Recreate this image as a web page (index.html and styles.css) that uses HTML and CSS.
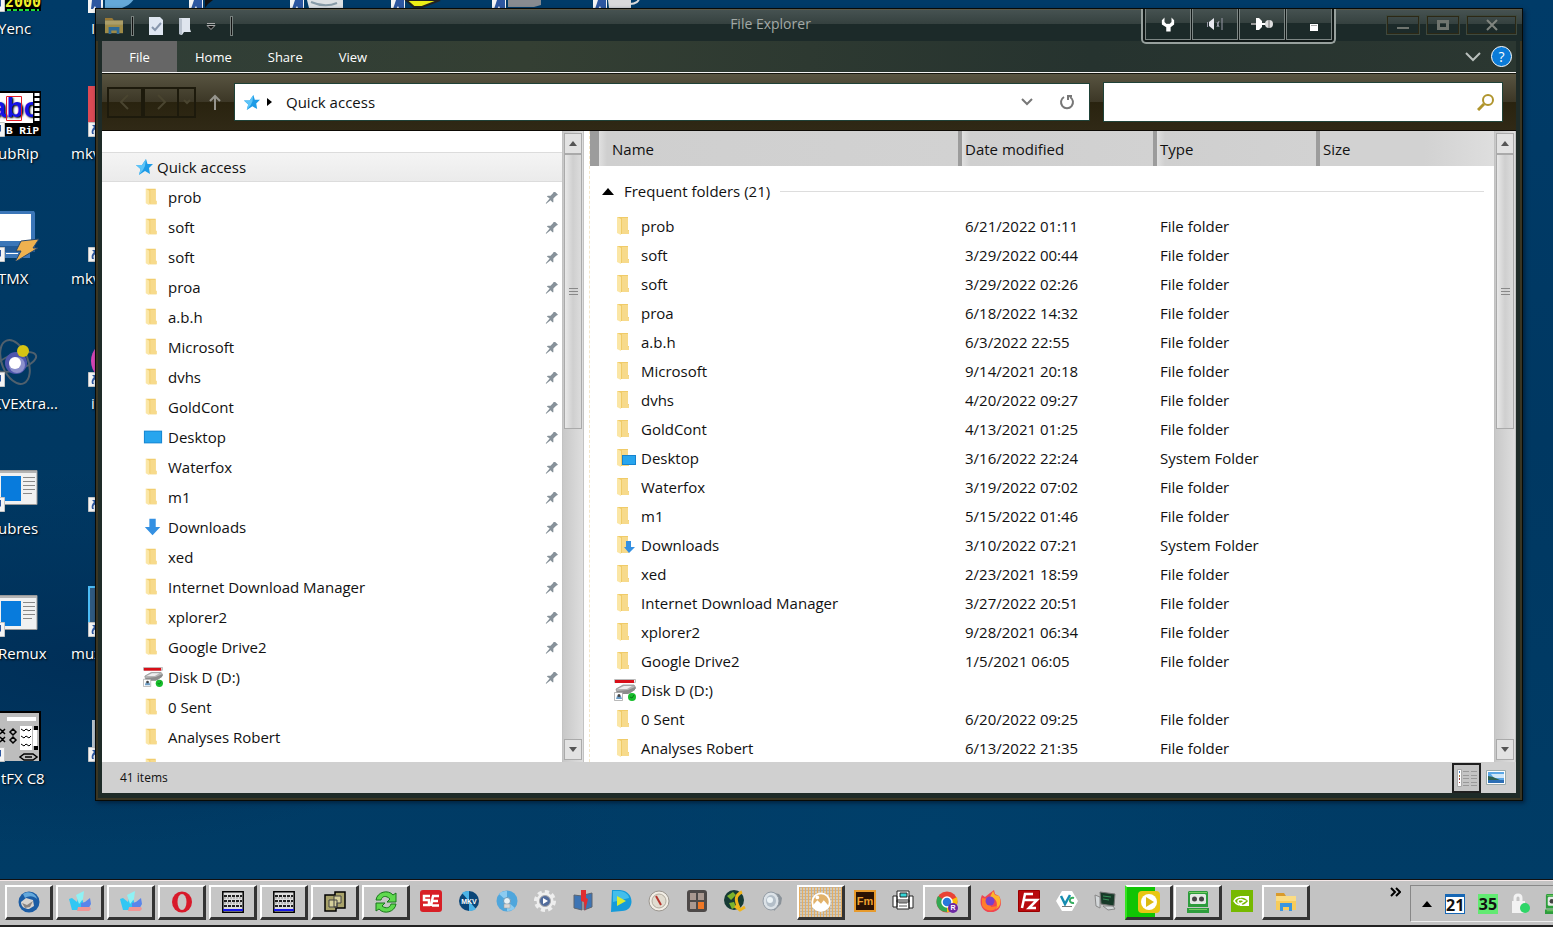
FILE: index.html
```html
<!DOCTYPE html>
<html lang="en">
  <head>
    <meta charset="UTF-8" />
    <meta name="viewport" content="width=device-width, initial-scale=1" />
    <title>File Explorer</title>
    <link rel="stylesheet" href="styles.css" />
  </head>
  <body>
    <!-- shared icons -->
    <svg class="sprite" aria-hidden="true">
      <symbol id="folder" viewBox="0 0 22 22">
        <path fill="#f0cb68" d="M3 2h11v13h1v4H7z" />
        <path fill="#f9e09a" d="M8 3h6v12l1 1v3H8z" opacity=".7" />
        <path fill="#fbe6a5" d="M3 2l4 2v16l-4-2z" />
      </symbol>
      <symbol id="desktop" viewBox="0 0 22 22">
        <path fill="#1583cf" d="M1 4h20v14H1z" />
        <path fill="#27a5ee" d="M2 5h18v12H2z" />
      </symbol>
      <symbol id="download" viewBox="0 0 22 22">
        <path fill="#3490e2" d="M7 2h7v9h5l-8.500 9L2 11h5z" />
      </symbol>
      <symbol id="folder-desktop" viewBox="0 0 22 22">
        <use href="#folder" />
        <path fill="#1583cf" d="M8 8h14v10H8z" />
        <path fill="#27a5ee" d="M9 9h12v8H9z" />
      </symbol>
      <symbol id="folder-download" viewBox="0 0 22 22">
        <use href="#folder" />
        <path fill="#3490e2" d="M12 7h5v6h4l-6 6-5-6h2z" />
      </symbol>
      <symbol id="disk" viewBox="0 0 22 22">
        <path fill="#eee" stroke="#bbb" d="M.5.5h21v3H.5z" />
        <path fill="#d80f18" d="M1 1h19v3H1z" />
        <path fill="#b5b5b5" stroke="#888" stroke-width=".7" d="M2 10l7-4h11l2 3-6 5H3z" />
        <path fill="#eee" d="M4 10l6-3h8l-5 3z" />
        <path fill="#8c8c8c" d="M3 12l11-1 7-3v3l-7 4H3z" />
        <path fill="#fff" stroke="#999" stroke-width=".7" d="M.5 13.500h8v8h-8z" />
        <path fill="#6b9cc4" d="M2 20l1-3h4l1 3z" />
        <circle cx="5" cy="16.500" r="1.500" fill="#444" />
        <circle cx="18" cy="18" r="4" fill="#16bd2b" />
        <path fill="none" stroke="#0a7a18" d="M16 18l2 1 2-3" />
      </symbol>
      <symbol id="star" viewBox="0 0 18 18">
        <path fill="#1d9be6" d="M11 1l1.500 5H18l-4 4 1 6-5-3-6 4 1.500-6L1 7h6z" />
        <path fill="#5cc4f8" d="M11 1l-1 7-2 4-4 5 1.500-6L1 7h6z" />
      </symbol>
      <symbol id="pin" viewBox="0 0 14 14">
        <path fill="#87929a" d="M9 1h2l3 3-2 1-3 3v4H8L6 10l-5 4 0-1 4-5-3-2 1-1h3l3-3z" />
      </symbol>
      <symbol id="explorer" viewBox="0 0 22 20">
        <path fill="#d99a2b" d="M1 1h8l2 3H1z" />
        <path fill="#f7cc5b" d="M1 4h20v14H1z" />
        <path fill="#fbdc83" d="M1 4h20v5H1z" />
        <path fill="#3a96e0" d="M5 11h12v8h-3v-4H8v4H5z" />
      </symbol>
      <symbol id="shortcut" viewBox="0 0 15 15">
        <path fill="#f4f4f4" stroke="#c4c4c4" d="M.5.5h14v14H.5z" />
        <path fill="#2d57a0" d="M4 3h7v7L8 7c-3 1-3 3-2 5H4c-1-3 0-5 2-7z" />
      </symbol>
      <symbol id="app-window" viewBox="0 0 44 50">
        <path fill="#f1f1f1" stroke="#999" d="M-1 9.500h40v34H-1z" />
        <path fill="#b4b4b4" d="M0 10h39v2H0z" />
        <path fill="#087bdc" d="M3 15h20v25H3z" />
        <path stroke="#888" d="M25 16.500h12M25 20.500h12M25 24.500h12M25 28.500h12M25 32.500h9" />
      </symbol>
      <symbol id="ie" viewBox="0 0 22 22">
        <path fill="#31c7f4" d="M0 8l3-1 5 4 2-7 4 6v7l-5 2H3z" />
        <path fill="#8ff2f4" d="M7 4l8-4-1 8-4 5z" />
        <path fill="#5a85ea" d="M12 12l4-1 5-4 1 6-4 7h-6z" />
        <path fill="#ee9696" d="M9 16h12l1 2-2 2H8z" />
      </symbol>
      <symbol id="keys" viewBox="0 0 22 22">
        <path fill="#ddd" stroke="#000" stroke-width="1.500" d="M.8.8h20.400v20.400H.8z" />
        <path stroke="#222" stroke-width="2" stroke-dasharray="3 1" d="M2 5h18M2 10h18M2 15h18" />
        <path stroke="#999" stroke-dasharray="2 1" d="M2 7h18M2 12h18" />
        <path stroke="#1717e8" stroke-width="2" d="M1 19h20" />
      </symbol>
      <symbol id="robot" viewBox="0 0 22 22">
        <path fill="#2d9d3c" d="M2 0h18l1 1v15H1V1zM0 17h22v5H0z" />
        <path fill="#e4e8e4" d="M4 3h14l1 1v8l-1 1H4l-1-1V4z" />
        <circle cx="7.500" cy="8" r="2.500" fill="#444" />
        <circle cx="14.500" cy="8" r="2.500" fill="#444" />
        <path fill="#76cc62" d="M2 1h18v1H2zM2 18h18v1H2z" />
      </symbol>
    </svg>

    <main class="desktop">
      <!-- column of shortcuts cut off by the left screen edge -->
      <div class="shortcut" style="--x: -2px; --row: 0">
        <svg class="pic" viewBox="0 0 44 50">
          <path fill="#000" d="M0 0h43v52H0z" />
          <text class="pixel" x="7" y="46">2000</text>
          <path stroke="#22e038" stroke-width="2" stroke-dasharray="4 2" d="M9 49h32" />
        </svg>
        <svg class="arrow"><use href="#shortcut" /></svg>
        <span>Yenc</span>
      </div>
      <div class="shortcut" style="--x: -2px; --row: 1">
        <svg class="pic" viewBox="0 0 44 50">
          <path fill="#000" d="M0 5h43v45H0z" />
          <path fill="#fff" d="M0 7h35v30H0z" />
          <text class="abc" x="-7" y="31">abc</text>
          <path d="M35 5h8v45h-8z" />
          <path stroke="#fff" stroke-width="5" stroke-dasharray="3 2" d="M39 7v30" />
          <path fill="none" stroke="#e31b23" d="M8.500 10.500h15v24h-15z" />
          <text class="rip" x="8" y="48">B RiP</text>
        </svg>
        <svg class="arrow"><use href="#shortcut" /></svg>
        <span>ubRip</span>
      </div>
      <div class="shortcut" style="--x: -2px; --row: 2">
        <svg class="pic" viewBox="0 0 44 50">
          <path fill="#3b76b8" d="M0 0h36l1 2v38H0z" />
          <path fill="#fff" d="M0 3h33v27H0z" />
          <path fill="#225a97" d="M0 35h37v6H0z" />
          <path fill="#3b76b8" d="M0 41h32v6H0z" />
          <path stroke="#fff" d="M8 42.500h12" />
          <path fill="#eeb14f" stroke="#26476e" d="M23 30l18-2-6 9h5L17 51l6-11h-5z" />
        </svg>
        <svg class="arrow"><use href="#shortcut" /></svg>
        <span>TMX</span>
      </div>
      <div class="shortcut" style="--x: -2px; --row: 3">
        <svg class="pic" viewBox="0 0 44 50">
          <g fill="none" stroke="#50606d" stroke-width="2">
            <ellipse cx="17" cy="26" rx="13" ry="23" transform="rotate(-22 17 26)" />
            <ellipse cx="18" cy="26" rx="21" ry="8" transform="rotate(-18 18 26)" />
          </g>
          <circle cx="18" cy="27" r="11" fill="#4e56ad" />
          <circle cx="19" cy="29" r="8" fill="#8c90cc" />
          <circle cx="17" cy="27" r="6" fill="#fff" />
          <circle cx="25" cy="15" r="6" fill="#d6c413" />
        </svg>
        <svg class="arrow"><use href="#shortcut" /></svg>
        <span class="cut">KVExtra...</span>
      </div>
      <div class="shortcut" style="--x: -2px; --row: 4">
        <svg class="pic"><use href="#app-window" /></svg>
        <svg class="arrow"><use href="#shortcut" /></svg>
        <span>ubres</span>
      </div>
      <div class="shortcut" style="--x: -2px; --row: 5">
        <svg class="pic"><use href="#app-window" /></svg>
        <svg class="arrow"><use href="#shortcut" /></svg>
        <span>Remux</span>
      </div>
      <div class="shortcut" style="--x: -2px; --row: 6">
        <svg class="pic" viewBox="0 0 44 50">
          <path fill="#bdbdbd" stroke="#000" stroke-width="2" d="M-1 1h43v52H-1z" />
          <path fill="#fff" d="M9 6h29v4H9zM22 15h12v24H22zM35 19h4v16h-4z" />
          <path fill="none" stroke="#000" d="M23 18l3 2 2-2 3 2 2-2M23 25l3 2 2-2 3 2 2-2M23 33l3 2 2-2 3 2 2-2" />
          <path fill="none" stroke="#000" stroke-width="1.500" d="M12 21l3-3 3 3-3 3zM12 29l3-3 3 3-3 3zM2 18l5 5M7 18l-5 5M2 26l5 5M7 26l-5 5M26 43h9l4 3-4 3h-9l-4-3zM27 46h7" />
          <path d="M36 15h4v4h-4zM36 35h4v4h-4z" />
        </svg>
        <svg class="arrow"><use href="#shortcut" /></svg>
        <span class="nudge">tFX C8</span>
      </div>

      <!-- second column, mostly behind the window -->
      <div class="shortcut behind" style="--x: 71px; --row: 0">
        <svg class="arrow"><use href="#shortcut" /></svg>
        <span class="indent">I</span>
      </div>
      <div class="shortcut behind" style="--x: 71px; --row: 1">
        <svg class="pic" viewBox="0 0 44 50"><path fill="#dc4a55" d="M0 0h40v38H0z" /></svg>
        <svg class="arrow"><use href="#shortcut" /></svg>
        <span>mkv</span>
      </div>
      <div class="shortcut behind" style="--x: 71px; --row: 2">
        <svg class="arrow"><use href="#shortcut" /></svg>
        <span>mkv</span>
      </div>
      <div class="shortcut behind" style="--x: 71px; --row: 3">
        <svg class="pic" viewBox="0 0 44 50"><circle cx="23" cy="25" r="20" fill="#d845b4" /></svg>
        <svg class="arrow"><use href="#shortcut" /></svg>
        <span class="indent">i</span>
      </div>
      <div class="shortcut behind" style="--x: 71px; --row: 4">
        <svg class="arrow"><use href="#shortcut" /></svg>
      </div>
      <div class="shortcut behind" style="--x: 71px; --row: 5">
        <svg class="pic" viewBox="0 0 44 50"><path fill="#305a80" stroke="#4cbcf5" stroke-width="2" d="M1 1h40v48H1z" /></svg>
        <svg class="arrow"><use href="#shortcut" /></svg>
        <span>mux</span>
      </div>
      <div class="shortcut behind" style="--x: 71px; --row: 6">
        <svg class="pic" viewBox="0 0 44 50"><path fill="#b8c4cc" d="M4 9h36v38H4z" /></svg>
        <svg class="arrow"><use href="#shortcut" /></svg>
      </div>

      <!-- bottoms of the shortcuts along the top edge -->
      <svg class="top-icons" width="560" height="13" viewBox="0 0 560 13" aria-hidden="true">
        <path fill="#f4f4f4" d="M0-2h15v15H0zM101-2h14v15h-14zM202-2h14v15h-14zM303-2h14v15h-14zM404-2h14v15h-14zM505-2h14v15h-14z" />
        <path fill="#2d57a0" d="M4 0h9v8H8l-1-2-2 3H3zM106 0h8v8h-5l-1-2-2 3h-3zM207 0h8v8h-5l-1-2-2 3h-3zM308 0h8v8h-5l-1-2-2 3h-3zM409 0h8v8h-5l-1-2-2 3h-3zM510 0h8v8h-5l-1-2-2 3h-3z" />
        <path fill="#65a9d8" d="M17-1h29c-3 5-7 7-12 9H17z" />
        <path fill="#111" d="M117 0h8l-5 4-3 4z" />
        <path fill="#dde1e4" d="M219 0h36v8h-34z" />
        <path fill="none" stroke="#879ba8" stroke-width="2" d="M223 2q14 6 26 1" />
        <path fill="#eeef16" stroke="#222" stroke-width="2" d="M318 0h34l-18 7h-8z" />
        <path fill="#888b90" d="M420 0h33v5l-7 2h-26z" />
        <path fill="#dadada" d="M520 0h23v8h-22z" />
        <path fill="none" stroke="#dadada" stroke-width="2" d="M542 4c6 0 9-3 9-6" />
      </svg>

      <section class="window">
        <header class="titlebar">
          <div class="quick-tools">
            <svg width="20" height="18" class="dim"><use href="#explorer" /></svg>
            <i class="divider"></i>
            <button aria-label="Properties">
              <svg width="16" height="20" viewBox="0 0 16 20">
                <path fill="#dfe7f2" d="M1 1h11l3 3v15H1z" />
                <path fill="none" stroke="#8797ad" stroke-width="2" d="M4 11l3 3 6-7" />
              </svg>
            </button>
            <button aria-label="New folder">
              <svg width="14" height="20" viewBox="0 0 14 20">
                <path fill="#dfe5ee" d="M1 2h11v11l1 3H6l-2 3-3-1z" />
                <path fill="#b9c2ce" d="M1 2l3 1v16l-3-1z" />
              </svg>
            </button>
            <button aria-label="Customize toolbar">
              <svg width="10" height="8" viewBox="0 0 10 8">
                <path stroke="#aaa" d="M1 1.500h8" />
                <path fill="#111" stroke="#aaa" d="M1 3.500h8l-4 4z" />
              </svg>
            </button>
            <i class="divider"></i>
          </div>
          <h1>File Explorer</h1>
          <div class="window-buttons">
            <button aria-label="Minimize">
              <svg width="14" height="12" viewBox="0 0 14 12"><path stroke="#70756f" stroke-width="2" d="M1 9h12" /></svg>
            </button>
            <button aria-label="Maximize">
              <svg width="14" height="12" viewBox="0 0 14 12"><path fill="none" stroke="#70756f" stroke-width="3" d="M2.500 2.500h9v7h-9z" /></svg>
            </button>
            <button class="close" aria-label="Close">
              <svg width="14" height="12" viewBox="0 0 14 12"><path stroke="#80857f" stroke-width="2" d="M2 1l10 10M12 1L2 11" /></svg>
            </button>
          </div>
        </header>

        <div class="overlay-tools">
          <button aria-label="Settings">
            <svg width="14" height="15" viewBox="0 0 16 16">
              <path fill="#fff" d="M4 0v5l2 2h4l2-2V0l3 3v5l-4 3v5H6v-5L1 8V3z" />
            </svg>
          </button>
          <button aria-label="Sound">
            <svg width="18" height="14" viewBox="0 0 18 14">
              <path fill="#e8e8f0" d="M3 5l5-4v12L3 9z" />
              <path fill="none" stroke="#999aa8" d="M1.500 5v5M11 5l2 5M13 4l-2 6M16 1v12" />
            </svg>
          </button>
          <button aria-label="Pin on top">
            <svg width="22" height="14" viewBox="0 0 22 14">
              <path stroke="#999" stroke-width="2" d="M0 7h6" />
              <path fill="#fff" d="M5 1h3l3 3v6l-3 3H5z" />
              <path stroke="#fff" stroke-width="2" d="M11 7h4" />
              <circle cx="18" cy="7" r="4" fill="#ddd" />
              <path stroke="#777" d="M18 3v8" />
            </svg>
          </button>
          <button class="last" aria-label="Minimize to tray">
            <svg width="8" height="7" viewBox="0 0 8 7"><path fill="#fff" d="M0 0h8v7H0z" /><path fill="#aaa" d="M1 1h6v1H1z" /></svg>
          </button>
        </div>

        <nav class="ribbon">
          <button class="active">File</button>
          <button>Home</button>
          <button>Share</button>
          <button>View</button>
          <div class="ribbon-right">
            <button class="expand" aria-label="Expand the ribbon">
              <svg width="16" height="10" viewBox="0 0 16 10"><path fill="none" stroke="#b9bfbc" stroke-width="2" d="M1 1l7 7 7-7" /></svg>
            </button>
            <button class="help" aria-label="Help">?</button>
          </div>
        </nav>

        <div class="navbar">
          <div class="history">
            <button aria-label="Back"><svg width="12" height="16" viewBox="0 0 12 16"><path d="M9 1L2 8l7 7" /></svg></button>
            <button aria-label="Forward"><svg width="12" height="16" viewBox="0 0 12 16"><path d="M3 1l7 7-7 7" /></svg></button>
            <button class="recent" aria-label="Recent locations"><svg width="8" height="6" viewBox="0 0 8 6"><path d="M1 1l3 3 3-3" /></svg></button>
          </div>
          <button class="up" aria-label="Up">
            <svg width="14" height="16" viewBox="0 0 14 16"><path fill="none" stroke="#96958e" stroke-width="2" d="M7 16V2M2 7l5-5 5 5" /></svg>
          </button>
          <div class="address">
            <svg width="17" height="17"><use href="#star" /></svg>
            <svg width="5" height="8" viewBox="0 0 5 8"><path d="M0 0l5 4-5 4z" /></svg>
            <a href="#quick">Quick access</a>
            <button aria-label="Previous locations">
              <svg width="12" height="8" viewBox="0 0 12 8"><path fill="none" stroke="#777" stroke-width="2" d="M1 1l5 5 5-5" /></svg>
            </button>
            <button aria-label="Refresh">
              <svg width="16" height="16" viewBox="0 0 16 16">
                <path fill="none" stroke="#777" stroke-width="2" d="M11 3a6 6 0 1 1-6 0" />
                <path fill="#777" d="M13 1H8v5h2V3h3z" />
              </svg>
            </button>
          </div>
          <label class="search">
            <input type="text" aria-label="Search" />
            <svg width="18" height="18" viewBox="0 0 18 18">
              <circle cx="11" cy="7" r="5" fill="none" stroke="#b0952d" stroke-width="2" />
              <path stroke="#b0952d" stroke-width="3" d="M7 11l-6 6" />
            </svg>
          </label>
        </div>

        <div class="panes">
          <nav class="tree">
            <a class="root" id="quick" href="#quick">
              <svg width="18" height="18"><use href="#star" /></svg>Quick access
            </a>
            <ul id="tree"></ul>
          </nav>
          <div class="scrollbar">
            <button aria-label="Scroll up"><svg width="8" height="5" viewBox="0 0 8 5"><path d="M0 5l4-5 4 5z" /></svg></button>
            <div class="thumb"><i></i></div>
            <button aria-label="Scroll down"><svg width="8" height="5" viewBox="0 0 8 5"><path d="M0 0l4 5 4-5z" /></svg></button>
          </div>
          <div class="splitter"></div>
          <div class="list">
            <table>
              <colgroup>
                <col class="col-name" />
                <col class="col-date" />
                <col class="col-type" />
                <col />
              </colgroup>
              <thead>
                <tr>
                  <th scope="col">Name</th>
                  <th scope="col">Date modified</th>
                  <th scope="col">Type</th>
                  <th scope="col">Size</th>
                </tr>
              </thead>
              <tbody id="files">
                <tr class="group">
                  <th colspan="4" scope="rowgroup">
                    <div>
                      <svg width="12" height="7" viewBox="0 0 12 7"><path d="M0 7l6-7 6 7z" /></svg>
                      Frequent folders (21)
                    </div>
                  </th>
                </tr>
              </tbody>
            </table>
          </div>
          <div class="scrollbar">
            <button aria-label="Scroll up"><svg width="8" height="5" viewBox="0 0 8 5"><path d="M0 5l4-5 4 5z" /></svg></button>
            <div class="thumb"><i></i></div>
            <button aria-label="Scroll down"><svg width="8" height="5" viewBox="0 0 8 5"><path d="M0 0l4 5 4-5z" /></svg></button>
          </div>
        </div>

        <footer class="status">
          <span>41 items</span>
          <button class="view on" aria-label="Details">
            <svg width="20" height="18" viewBox="0 0 20 18">
              <path fill="#fff" stroke="#aaa" d="M.5.5h4v17h-4z" />
              <path stroke="#999" d="M6 2.500h6M14 2.500h6M6 6.500h6M14 6.500h6M6 9.500h6M14 9.500h6M6 13.500h6M14 13.500h6M6 16.500h6M14 16.500h6" />
              <path fill="#4a7cba" d="M2 2h1v2H2z" /><path fill="#b07a3a" d="M2 6h1v2H2z" />
              <path fill="#a04040" d="M2 9h1v2H2zM2 13h1v1H2z" />
            </svg>
          </button>
          <button class="view" aria-label="Large icons">
            <svg width="20" height="15" viewBox="0 0 20 15">
              <path fill="#fff" stroke="#9aa" d="M.5.5h19v14H.5z" />
              <path fill="#5aa7e6" d="M2 2h16v11H2z" />
              <path fill="#cfe7f8" d="M5 4h13v4H8z" />
              <path fill="#2e6150" d="M2 6l5 1 7 3H2z" />
              <path fill="#2d6fb5" d="M2 10h16v3H2z" />
            </svg>
          </button>
        </footer>
      </section>
    </main>

    <footer class="taskbar">
      <button class="task" aria-label="Thunderbird">
        <svg viewBox="0 0 22 22"><circle cx="11" cy="11" r="10.500" fill="#1c5da5" /><path fill="#65a9dc" d="M5 3c6-4 13 0 14 5-4-4-9-3-12-1z" /><path fill="#d8d4d0" d="M3 11l5-4 7 2 1 6-5 3c-4 0-8-2-8-7z" /><path fill="#8b8583" d="M4 12l5 2 6-4-3 6-5 1z" /></svg>
      </button>
      <button class="task" aria-label="Mail"><svg><use href="#ie" /></svg></button>
      <button class="task" aria-label="Mail 2"><svg><use href="#ie" /></svg></button>
      <button class="task" aria-label="Opera">
        <svg viewBox="0 0 22 22"><ellipse cx="11" cy="11" rx="10" ry="10.500" fill="#d8192a" /><ellipse cx="11" cy="11" rx="4.500" ry="8" fill="#c6c6c6" /></svg>
      </button>
      <button class="task" aria-label="Keyboard"><svg><use href="#keys" /></svg></button>
      <button class="task" aria-label="Keyboard 2"><svg><use href="#keys" /></svg></button>
      <button class="task" aria-label="Windows">
        <svg viewBox="0 0 22 22"><path fill="#a8a26a" stroke="#000" stroke-width="1.500" d="M1 4h10V1h10v16h-9v3H1z" /><path fill="#d6d09b" stroke="#444" d="M5 9h8v7H5zM10 5h7v7h-4v4h-3z" /></svg>
      </button>
      <button class="task" aria-label="Sync">
        <svg viewBox="0 0 22 22"><path fill="#5fd94e" stroke="#19761c" d="M1 9c1-8 12-11 17-5l3-2v9h-9l3-3c-4-4-8-3-9 1z" /><path fill="#5fd94e" stroke="#19761c" d="M21 13c-1 8-12 11-17 5l-3 2v-8h9l-3 3c4 3 8 2 9-2z" /></svg>
      </button>
      <a class="launch" href="#" aria-label="Subtitle Edit">
        <svg viewBox="0 0 22 22"><rect width="22" height="22" rx="3" fill="#d81f26" /><path fill="none" stroke="#fff" stroke-width="2.500" d="M10 6H4v4h5v5H3M12 6h7M12 11h6M12 15.500h7M13 6l-2 10" /></svg>
      </a>
      <a class="launch" href="#" aria-label="MKV">
        <svg viewBox="0 0 22 22"><circle cx="11" cy="11" r="10" fill="#0b4678" /><path fill="#4bb4e8" d="M11 11L4 3c3-2 6-2 7-2zM11 11l7 8c-3 2-6 2-7 2z" /><text class="tiny" x="11" y="14">MKV</text></svg>
      </a>
      <a class="launch" href="#" aria-label="Disc">
        <svg viewBox="0 0 22 22"><circle cx="11" cy="11" r="10.500" fill="#4fa6dc" /><path fill="#8ccbf0" d="M11 11L3 4c3-3 6-3 8-3zM11 11l8 7c-3 3-6 3-8 3z" /><circle cx="11" cy="11" r="3.500" fill="#e8f1f5" stroke="#6b98b6" /><path fill="#d8d8d8" stroke="#999" stroke-width=".5" d="M8 14h6v4H8z" /></svg>
      </a>
      <a class="launch" href="#" aria-label="Converter">
        <svg viewBox="0 0 22 22"><circle cx="11" cy="11" r="9" fill="none" stroke="#eee" stroke-width="4" stroke-dasharray="4 3" /><circle cx="11" cy="11" r="8.500" fill="#eee" /><circle cx="11" cy="11" r="5.500" fill="#526c9c" stroke="#aaa" /><path fill="#fff" d="M9 8l5 3-5 3z" /></svg>
      </a>
      <a class="launch" href="#" aria-label="Joiner">
        <svg viewBox="0 0 22 22"><path fill="#3d74b4" stroke="#5c6570" d="M2 5l8 1v14l-8-2zM12 5l8-2v14l-8 3z" /><path fill="#e12d31" d="M9 0h5v8l2 1-3 12-1-9-3-1z" /></svg>
      </a>
      <a class="launch" href="#" aria-label="Player">
        <svg viewBox="0 0 22 22"><path fill="#159bda" d="M2 0h8c15 1 15 21 2 21L1 22z" /><path fill="#62d5f7" d="M3 1h7c7 1 9 5 9 7L3 12z" opacity=".6" /><path fill="#d8ed32" d="M7 6l9 5-9 5z" /></svg>
      </a>
      <a class="launch" href="#" aria-label="Gauge">
        <svg viewBox="0 0 22 22"><circle cx="11" cy="11" r="10" fill="#f2eee6" stroke="#9c9790" /><circle cx="11" cy="11" r="7" fill="#e1dcd0" stroke="#b3aca0" /><path stroke="#b5342c" stroke-width="2" d="M8 6l5 9" /></svg>
      </a>
      <a class="launch" href="#" aria-label="Calculator">
        <svg viewBox="0 0 22 22"><rect x="1" width="20" height="22" rx="3" fill="#4d4948" /><path fill="#a99890" d="M4 3h6v7H4zM12 3h6v7h-6zM4 12h6v7H4z" /><path fill="#ee7725" d="M12 12h6v7h-6z" /></svg>
      </a>
      <a class="launch" href="#" aria-label="Globe">
        <svg viewBox="0 0 22 22"><circle cx="10" cy="10" r="10" fill="#163b35" /><path fill="#7db42c" d="M3 6l6-4 3 3-5 5zM5 13l5-1 2 5-4 2z" /><path fill="none" stroke="#efb41c" stroke-width="3" d="M18 2c-7 3-7 8-3 16M11 16l5 4 5-3" /></svg>
      </a>
      <a class="launch" href="#" aria-label="Volume">
        <svg viewBox="0 0 22 22"><path fill="#8a9299" d="M8 2l9 2 3 4-1 6-7 7z" /><ellipse cx="9" cy="11" rx="8" ry="9" fill="#dce2e7" stroke="#929ba4" /><ellipse cx="9" cy="11" rx="5" ry="6" fill="#b3bec8" /><circle cx="8" cy="10" r="3" fill="#edf4f7" /></svg>
      </a>
      <button class="task pressed" aria-label="Photos">
        <svg viewBox="0 0 24 22"><circle cx="12" cy="11" r="9.500" fill="#e2b26b" stroke="#fff" stroke-width="2" /><path fill="#fff" d="M2 16l6-7 4 4 3-4 6 7c-5 7-15 7-19 0z" /><circle cx="8" cy="6" r="2" fill="#fff" /></svg>
      </button>
      <a class="launch" href="#" aria-label="FrameMaker">
        <svg viewBox="0 0 22 22"><path fill="#2b1203" stroke="#e79a2c" stroke-width="2" d="M1 1h20v20H1z" /><text class="fm" x="11" y="15">Fm</text></svg>
      </a>
      <a class="launch" href="#" aria-label="Printer">
        <svg viewBox="0 0 22 22"><path fill="#fff" stroke="#222" d="M5 1h12v11H5zM1 6h4v11H1zM17 6h4v12h-4zM5 10h12v9H5z" /><path fill="#36d6d8" stroke="#222" d="M8 3h7v4H8z" /><path stroke="#555" d="M7 13h8M7 16h8" /></svg>
      </a>
      <button class="task" aria-label="Chrome">
        <svg viewBox="0 0 22 22"><circle cx="11" cy="11" r="10.500" fill="#e94235" /><path fill="#fbbd08" d="M11 11l10-5c2 8-3 15-10 15z" /><path fill="#32a853" d="M2 5l9 6v10C2 21-2 12 2 5z" /><circle cx="11" cy="11" r="5" fill="#2878dc" stroke="#fff" stroke-width="1.500" /><circle cx="17" cy="17" r="5" fill="#6d28a4" /><text class="tiny" x="17" y="19">R</text></svg>
      </button>
      <a class="launch" href="#" aria-label="Firefox">
        <svg viewBox="0 0 22 22"><path fill="#f04652" d="M2 5l3 2 5-4 4-3 1 4 4 2c3 5 3 12-3 15-6 3-13 1-15-6-1-4 0-8 1-10z" /><path fill="#ffb52b" d="M13 1l2 4 4 1c3 6 1 11-3 13 2-5 1-11-6-12z" /><path fill="#ff7d2c" d="M2 8l6 1 3 8 7-1c-4 7-14 5-16-1z" /><circle cx="10" cy="11" r="4.500" fill="#7840cc" /></svg>
      </a>
      <a class="launch" href="#" aria-label="FileZilla">
        <svg viewBox="0 0 22 22"><path fill="#b90a0d" stroke="#900" d="M.5.5h21v21H.5z" /><path fill="none" stroke="#fff" stroke-width="2.500" d="M4 18L7 4h8M6 10h7M12 10h7l-8 8h7" /></svg>
      </a>
      <a class="launch" href="#" aria-label="VeraCrypt">
        <svg viewBox="0 0 22 22"><path fill="#fff" d="M6 1h10l6 10-6 10H6L0 11z" /><path fill="none" stroke="#168cb1" stroke-width="2.500" d="M5 6l4 8 5-9" /><path fill="none" stroke="#35ae60" stroke-width="2" d="M18 8c-5-2-6 6 0 5" /><path stroke="#777" d="M6 16.500h10" /></svg>
      </a>
      <a class="launch" href="#" aria-label="Remote computer">
        <svg viewBox="0 0 22 22"><path fill="#d3d7d9" stroke="#888" d="M1 5l5 2v11l-4-2zM9 16h10l2 3-7 1z" /><path fill="#173a28" stroke="#777" d="M6 2l15 2-1 12-13-2z" /><path stroke="#37945a" d="M9 6l8 1M9 9l6 1" /></svg>
      </a>
      <button class="task progress" aria-label="Media player">
        <svg viewBox="0 0 22 22"><rect width="22" height="22" rx="4" fill="#e8c613" /><circle cx="11" cy="11" r="8" fill="#fff" /><path fill="#dbb911" d="M8 6l8 5-8 5z" /></svg>
      </button>
      <button class="task" aria-label="RoboForm"><svg><use href="#robot" /></svg></button>
      <a class="launch" href="#" aria-label="Nvidia">
        <svg viewBox="0 0 22 22"><path fill="#76b900" d="M0 0h22v22H0z" /><path fill="#fff" d="M9 6h9v10H9z" /><path fill="#76b900" d="M9 8c4-1 6 1 8 3-3 4-6 4-8 4z" /><path fill="none" stroke="#fff" stroke-width="1.500" d="M10 7C6 7 4 9 3 11c2 3 5 5 8 3M10 9.500c-4 0-4 4 0 4l4-2.500z" /></svg>
      </a>
      <button class="task" aria-label="File Explorer"><svg><use href="#explorer" /></svg></button>

      <button class="more" aria-label="More toolbars">
        <svg width="11" height="10" viewBox="0 0 11 10"><path fill="none" stroke="#000" stroke-width="2" d="M1 1l4 4-4 4M6 1l4 4-4 4" /></svg>
      </button>
      <div class="tray">
        <button aria-label="Show hidden icons"><svg width="10" height="6" viewBox="0 0 10 6"><path d="M0 6l5-6 5 6z" /></svg></button>
        <span class="day">21</span>
        <span class="temp">35</span>
        <svg class="lock" width="20" height="22" viewBox="0 0 20 22">
          <path fill="none" stroke="#f2f2f2" stroke-width="3" d="M4 9V5c0-4 6-4 6 0v4" />
          <path fill="#f2f2f2" d="M1 8h13v12H1z" />
          <circle cx="14" cy="15" r="5" fill="#2fd568" />
        </svg>
        <svg width="22" height="20"><use href="#robot" /></svg>
      </div>
    </footer>

    <script>
      const folders = [
        { name: "prob", date: "6/21/2022 01:11" },
        { name: "soft", date: "3/29/2022 00:44" },
        { name: "soft", date: "3/29/2022 02:26" },
        { name: "proa", date: "6/18/2022 14:32" },
        { name: "a.b.h", date: "6/3/2022 22:55" },
        { name: "Microsoft", date: "9/14/2021 20:18" },
        { name: "dvhs", date: "4/20/2022 09:27" },
        { name: "GoldCont", date: "4/13/2021 01:25" },
        { name: "Desktop", date: "3/16/2022 22:24", type: "System Folder", icon: "desktop" },
        { name: "Waterfox", date: "3/19/2022 07:02" },
        { name: "m1", date: "5/15/2022 01:46" },
        { name: "Downloads", date: "3/10/2022 07:21", type: "System Folder", icon: "download" },
        { name: "xed", date: "2/23/2021 18:59" },
        { name: "Internet Download Manager", date: "3/27/2022 20:51" },
        { name: "xplorer2", date: "9/28/2021 06:34" },
        { name: "Google Drive2", date: "1/5/2021 06:05" },
        { name: "Disk D (D:)", date: "", type: "", icon: "disk" },
        { name: "0 Sent", date: "6/20/2022 09:25", unpinned: true },
        { name: "Analyses Robert", date: "6/13/2022 21:35", unpinned: true },
      ];

      const tree = document.getElementById("tree");
      const files = document.getElementById("files");

      folders.forEach((folder) => {
        const icon = folder.icon || "folder";
        const type = folder.type === undefined ? "File folder" : folder.type;
        const rowIcon =
          icon === "desktop" || icon === "download" ? `folder-${icon}` : icon;

        const li = document.createElement("li");
        li.innerHTML = `
          <a href="#"><svg class="icon"><use href="#${icon}" /></svg>${folder.name}</a>
          ${folder.unpinned ? "" : '<svg class="pin"><use href="#pin" /></svg>'}
        `;
        tree.appendChild(li);

        const row = document.createElement("tr");
        row.innerHTML = `
          <td><div class="name"><svg><use href="#${rowIcon}" /></svg>${folder.name}</div></td>
          <td>${folder.date}</td>
          <td>${type}</td>
          <td></td>
        `;
        files.appendChild(row);
      });

      // next entry, only its top edge shows above the status bar
      const next = document.createElement("li");
      next.innerHTML = '<a href="#" aria-label="Next folder"><svg class="icon"><use href="#folder" /></svg></a>';
      tree.appendChild(next);
    </script>
  </body>
</html>
```
FILE: styles.css
```css
* {
  box-sizing: border-box;
}

body {
  margin: 0;
  height: 100vh;
  display: flex;
  flex-direction: column;
  overflow: hidden;
  font-family: "Open Sans", "Noto Sans", sans-serif;
  font-size: 15px;
  color: #111;
  background: #003a64;
}

button {
  font: inherit;
  color: inherit;
  padding: 0;
  border: none;
  background: none;
}

a {
  color: inherit;
  text-decoration: none;
}

svg {
  display: block;
  flex: none;
}

.sprite {
  position: absolute;
  width: 0;
  height: 0;
}

/* desktop */
.desktop {
  flex: 1;
  min-height: 0;
  position: relative;
  overflow: hidden;
  background:
    radial-gradient(ellipse at 60% 95%, #003f6a 0, transparent 30%),
    radial-gradient(ellipse at 5% 75%, #002f58 0, transparent 20%),
    linear-gradient(#003b68, #003862 50%, #003c66);
}

.shortcut {
  position: absolute;
  left: var(--x);
  top: calc(var(--row) * 125px - 40px);
  width: 76px;
  height: 84px;
  color: #fff;
  text-shadow: 1px 1px 2px #000;
}

.shortcut .pic {
  position: absolute;
  left: 0;
  top: 1px;
  width: 44px;
  height: 50px;
}

.shortcut .arrow {
  position: absolute;
  left: -8px;
  top: 37px;
  width: 15px;
  height: 15px;
}

.shortcut.behind .pic,
.shortcut.behind .arrow {
  left: 17px;
}

.shortcut span {
  position: absolute;
  left: 0;
  top: 58px;
  line-height: 20px;
  white-space: nowrap;
}

.shortcut .cut {
  left: -6px;
}

.shortcut .nudge {
  left: 3px;
}

.shortcut .indent {
  left: 20px;
}

.pixel {
  font: bold 15px "DejaVu Sans Mono", monospace;
  fill: #f2ee2a;
}

.abc {
  font: bold 28px "Liberation Sans", sans-serif;
  fill: #1414e6;
}

.rip {
  font: bold 11px "Liberation Mono", monospace;
  fill: #fff;
}

.top-icons {
  position: absolute;
  left: 88px;
  top: 0;
}

/* explorer window */
.window {
  position: absolute;
  top: 8px;
  right: 30px;
  bottom: 79px;
  left: 95px;
  display: flex;
  flex-direction: column;
  padding: 0 6px 7px;
  border: 1px solid #080a06;
  background: #1e2b28;
  box-shadow: inset 0 0 0 2px #3a3623, 2px 2px 4px #00223f;
}

.titlebar {
  height: 32px;
  flex: none;
  margin: 0 -6px;
  padding: 0 5px 0 8px;
  display: grid;
  grid-template-columns: 1fr auto 1fr;
  align-items: center;
  border-top: 1px solid #5b5a4a;
  background: linear-gradient(#465251, #35413f 14px, #1c2a29 14px, #1c2a29);
}

.titlebar h1 {
  margin: 0 80px 0 0;
  font-size: 14px;
  font-weight: normal;
  line-height: 28px;
  align-self: start;
  color: #a2a9a6;
}

.quick-tools {
  display: flex;
  align-items: center;
  gap: 14px;
}

.quick-tools .dim {
  opacity: 0.6;
}

.quick-tools .divider {
  width: 3px;
  height: 20px;
  border: 1px solid #77807d;
  background: #111;
}

.quick-tools .divider:nth-child(2) {
  margin-left: -7px;
}

.window-buttons {
  justify-self: end;
  align-self: start;
  display: flex;
  gap: 6px;
  padding-top: 5px;
}

.window-buttons button {
  width: 34px;
  height: 20px;
  display: grid;
  place-items: center;
  border: 2px solid #2c2815;
  outline: 1px solid #3d493f;
  outline-offset: -1px;
}

.window-buttons .close {
  width: 51px;
}

.overlay-tools {
  position: absolute;
  top: 0;
  right: 186px;
  display: flex;
  gap: 1px;
  padding: 0 2px 2px;
  border: 2px solid #97a09d;
  border-top: none;
  border-radius: 0 0 5px 5px;
  background: #0f1716;
}

.overlay-tools button {
  width: 46px;
  height: 31px;
  display: grid;
  place-items: center;
  border: 1px solid #7e8785;
  border-top: none;
  background: linear-gradient(#465251, #35413f 14px, #1c2a29 14px);
}

.overlay-tools .last {
  padding: 6px 0 0 10px;
}

.ribbon {
  height: 32px;
  flex: none;
  display: flex;
  border-bottom: 1px solid #f4f4f4;
  color: #fff;
  font-size: 13px;
  background: linear-gradient(90deg, #303e37, #343f33 30%, #26332f 70%, #2b3731);
}

.ribbon button {
  padding: 0 18px;
}

.ribbon .active {
  width: 75px;
  background: #666;
}

.ribbon-right {
  display: flex;
  align-items: center;
  gap: 10px;
  margin-left: auto;
  padding-right: 4px;
}

.ribbon .expand {
  padding: 0;
}

.ribbon .help {
  width: 21px;
  height: 21px;
  padding: 0;
  font-size: 14px;
  line-height: 18px;
  border: 1px solid #fff;
  border-radius: 50%;
  background: #0b7bd8;
}

.navbar {
  height: 58px;
  flex: none;
  display: flex;
  align-items: center;
  padding: 0 13px 0 5px;
  border-top: 1px solid #14150d;
  border-bottom: 1px solid #0d0a05;
  background: linear-gradient(#585441, #3c3726 28px, #29230f 28px, #302916);
}

.history {
  display: flex;
}

.history button {
  width: 36px;
  height: 31px;
  display: grid;
  place-items: center;
  border: 2px solid #1d1a0c;
}

.history svg {
  fill: none;
  stroke: #4a4530;
  stroke-width: 2;
}

.history .recent {
  width: 17px;
  border-left: none;
}

.up {
  width: 38px;
  display: grid;
  place-items: center;
}

.address {
  flex: 854;
  height: 38px;
  display: flex;
  align-items: center;
  padding: 0 14px 0 8px;
  border: 1px solid #1f4238;
  background: #fff;
}

.address svg + svg {
  margin: 0 14px 0 7px;
}

.address a {
  flex: 1;
}

.address button {
  margin-left: 26px;
}

.search {
  flex: 402;
  height: 40px;
  margin-left: 13px;
  padding-right: 7px;
  display: flex;
  align-items: center;
  border: 1px solid #1f4238;
  background: #fff;
}

.search input {
  flex: 1;
  min-width: 0;
  height: 100%;
  padding: 0 8px;
  border: none;
  outline: none;
  font: inherit;
  background: transparent;
}

/* panes */
.panes {
  flex: 1;
  min-height: 0;
  display: flex;
  background: #fff;
}

.tree {
  width: 460px;
  flex: none;
  padding-top: 21px;
  overflow: hidden;
}

.tree .root {
  height: 30px;
  display: flex;
  align-items: center;
  gap: 4px;
  padding-left: 33px;
  border: 1px solid #dcdcdc;
  border-width: 1px 0;
  background: linear-gradient(#f4f4f4, #ebebeb);
}

.tree ul {
  list-style: none;
  margin: 0;
  padding: 0;
}

.tree li {
  height: 30px;
  display: flex;
  align-items: center;
  padding: 0 4px 0 41px;
}

.tree li a {
  flex: 1;
  display: flex;
  align-items: center;
  gap: 5px;
}

.tree .icon {
  width: 20px;
  height: 20px;
}

.tree .pin {
  width: 13px;
  height: 13px;
}

.scrollbar {
  width: 22px;
  flex: none;
  display: flex;
  flex-direction: column;
  padding: 2px 1px;
  border: 1px solid #c2c2c2;
  border-width: 0 1px;
  background: linear-gradient(90deg, #c8c8c8, #dedede);
}

.scrollbar button {
  height: 21px;
  flex: none;
  display: grid;
  place-items: center;
  border: 1px solid #aaa;
  background: #e2e2e2;
}

.scrollbar button svg {
  fill: #555;
}

.scrollbar .thumb {
  height: 275px;
  display: grid;
  place-items: center;
  margin-bottom: auto;
  border: 1px solid #aaa;
  background: linear-gradient(90deg, #e8e8e8, #cfcfcf 50%, #dcdcdc);
}

.scrollbar .thumb i {
  width: 9px;
  height: 7px;
  background: repeating-linear-gradient(#888 0 1px, transparent 1px 3px);
}

.splitter {
  width: 6px;
  flex: none;
  border-right: 1px dashed #f3e6c8;
}

.list {
  flex: 1;
  min-width: 0;
  overflow: hidden;
}

table {
  width: 100%;
  table-layout: fixed;
  border-spacing: 0;
}

.col-name {
  width: 368px;
}

.col-date {
  width: 195px;
}

.col-type {
  width: 163px;
}

th,
td {
  padding: 0;
  font-weight: normal;
  text-align: left;
  white-space: nowrap;
}

thead th {
  height: 35px;
  padding: 0 0 0 3px;
  border-left: 4px solid #9c9c9c;
  background: linear-gradient(90deg, #e0e0e0, #cfcfcf 8px, #d2d2d2);
}

thead th:first-child {
  padding-left: 13px;
  border-left-width: 9px;
}

thead th:last-child {
  background: linear-gradient(90deg, #d2d2d2, #d2d2d2 60%, #dedede);
}

tbody td {
  height: 29px;
  padding-left: 7px;
}

tbody td:first-child {
  padding-left: 24px;
}

.group th {
  height: 45px;
}

.group div {
  display: flex;
  align-items: center;
  gap: 10px;
  padding: 5px 10px 0 12px;
}

.group div::after {
  content: "";
  flex: 1;
  border-top: 1px solid #ddd;
}

.name {
  display: flex;
  align-items: center;
  gap: 5px;
}

.name svg {
  width: 22px;
  height: 22px;
}

.status {
  height: 31px;
  flex: none;
  display: flex;
  align-items: center;
  gap: 5px;
  padding: 0 10px 0 18px;
  font-size: 12px;
  background: #d0d0d0;
}

.status span {
  flex: 1;
}

.status .view.on {
  width: 29px;
  height: 30px;
  display: grid;
  place-items: center;
  border: 2px solid #1f1f1f;
  background: #c4c4c4;
}

/* taskbar */
.taskbar {
  height: 47px;
  flex: none;
  display: flex;
  align-items: flex-start;
  padding: 4px 0 0 3px;
  border-top: 1px solid #f4e8e8;
  border-bottom: 2px solid #222;
  background: #c3c3c3;
  box-shadow: 0 -1px 0 #111;
  z-index: 1;
}

.task {
  width: 48px;
  height: 35px;
  flex: none;
  display: grid;
  place-items: center;
  margin: 0 1px 0 2px;
  border: 2px solid #fff;
  border-right: 3px solid #333;
  border-bottom: 3px solid #333;
  background: #c6c6c6;
}

.task svg,
.launch svg {
  width: 22px;
  height: 22px;
}

.launch {
  width: 38px;
  height: 32px;
  flex: none;
  display: grid;
  place-items: center;
}

.task + .launch {
  margin-left: 1px;
}

.task.pressed {
  margin: 0 0 0 5px;
  background:
    repeating-linear-gradient(90deg, #e5ae62 0 1px, transparent 1px 3px),
    repeating-linear-gradient(#b9b3a8 0 1px, #d3cbbb 1px 3px);
}

.pressed ~ .task {
  margin: 0 0 0 1px;
}

.task.progress {
  border-left-color: #35e321;
  background: linear-gradient(90deg, #10c404 66%, #c6c6c6 66%);
}

.tiny {
  font: bold 7px "Liberation Sans", sans-serif;
  fill: #fff;
  text-anchor: middle;
}

.fm {
  font: bold 11px "Liberation Sans", sans-serif;
  fill: #eda130;
  text-anchor: middle;
}

.more {
  margin: 2px 9px 0 auto;
}

.tray {
  width: 143px;
  height: 37px;
  flex: none;
  display: flex;
  align-items: center;
  gap: 13px;
  padding-left: 11px;
  overflow: hidden;
  border: 1px solid #888;
  border-right: none;
  border-bottom-color: #eee;
}

.day,
.temp {
  width: 20px;
  height: 20px;
  flex: none;
  font: bold 16px/20px "Open Sans", sans-serif;
  text-align: center;
}

.day {
  border: 1px solid #1767b5;
  border-top-width: 3px;
  line-height: 16px;
  background: #fff;
}

.temp {
  background: #62ea72;
}
```
